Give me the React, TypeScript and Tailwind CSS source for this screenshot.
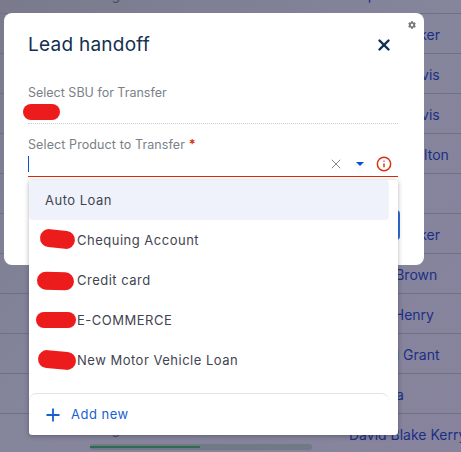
import { Info, Plus, X } from 'lucide-react';
import { FaCog } from 'react-icons/fa';

const rows = ['Gupta Rao', 'Robert Parker', 'Jessica Davis', 'Jessica Davis', 'Maria Hamilton', 'Rao', 'Robert Parker', 'Martin Brown', 'Emma Henry', 'Richard Grant', 'Anna Sa', 'David Blake Kerry'];

const options = [
  { label: 'Chequing Account', blob: 'w-[35px] h-[18px] ml-[-5px] mr-[2px] mt-[-4px] rotate-[6deg]' },
  { label: 'Credit card', blob: 'w-[37px] h-[18px] ml-[-8px] mr-[3px] rotate-[2deg]' },
  { label: 'E-COMMERCE', blob: 'w-[40px] h-[16px] ml-[-9px] mr-[1px] mt-[-2px]' },
  { label: 'New Motor Vehicle Loan', blob: 'w-[38px] h-[18px] ml-[-7px] mr-[1px] mt-[-2px] rotate-[5deg]' },
];

export default function App() {
  return (
    <div className="relative w-[461px] h-[452px] overflow-hidden bg-gradient-to-br from-[#797b8c] via-[#85859c] to-[#87839c] font-['Inter',sans-serif]">
      {/* table behind the overlay */}
      <div className="mt-[-26px]">
        {rows.map((name, i) => (
          <div key={i} className="h-[40px] border-b border-[#6f7183] flex items-center pt-[2px] text-[14px] whitespace-nowrap">
            <span className={`w-[349px] shrink-0 pl-[66px] text-[#4a4c58] ${i === rows.length - 1 ? 'mb-[12px]' : ''}`}>
              {i === 0 || i === rows.length - 1 ? 'Pending' : ''}
            </span>
            <span className="text-[#1c2f86]">{name}</span>
          </div>
        ))}
      </div>

      {/* modal */}
      <div className="absolute left-[4px] top-[13px] w-[420px] h-[252px] rounded-[8px] bg-white pl-[24px] pr-[26px] pt-[18px]">
        <FaCog className="absolute right-[8px] top-[8px] w-[8px] h-[8px] text-[#777]" />
        <div className="flex items-center justify-between pr-[5px]">
          <h2 className="text-[19px] leading-[28px] tracking-[0.25px] text-[#12304f]">Lead handoff</h2>
          <X className="w-[18px] h-[18px] text-[#12304f]" strokeWidth={3.2} />
        </div>
        <div className="mt-[26px] border-b border-dotted border-[#ccc] pb-[3px]">
          <p className="text-[12.5px] leading-[16px] text-[#7b7f87]">Select SBU for Transfer</p>
          <div className="mt-[3px] ml-[-5px] w-[37px] h-[16px] rounded-full bg-[#ec1c1c]" />
        </div>
        <div className="mt-[13px]">
          <p className="text-[12.5px] tracking-[0.1px] leading-[16px] text-[#7b7f87]">
            Select Product to Transfer <span className="text-[#d8330f] font-bold">*</span>
          </p>
          <div className="flex items-center h-[24px] pb-[1px] pr-[6px] border-b border-[#d62b06]">
            <div className="w-[1px] h-[16px] bg-[#0b4fd6]" />
            <div className="ml-auto flex items-center gap-[12px]">
              <X className="w-[16px] h-[16px] text-[#888]" strokeWidth={1.5} />
              <div className="w-0 h-0 border-x-[4px] border-x-transparent border-t-[4px] border-t-[#0b4fd6]" />
              <Info className="w-[16px] h-[16px] text-[#d8330f]" strokeWidth={2.2} />
            </div>
          </div>
        </div>
        <div className="absolute right-[24px] top-[197px] w-[60px] h-[30px] rounded-[4px] bg-[#2f6fdc]" />
      </div>

      {/* dropdown */}
      <div className="absolute left-[29px] top-[180px] w-[369px] h-[255px] rounded-[3px] bg-white shadow-[0_1px_5px_rgba(0,0,0,0.3)] flex flex-col text-[13px] tracking-[0.5px]">
        <div className="h-[40px] pt-[2px] mr-[9px] rounded-[4px] bg-[#eff2fb] flex items-center pl-[16px] text-[#3f4550]">Auto Loan</div>
        {options.map(o => (
          <div key={o.label} className="h-[40px] pt-[2px] flex items-center pl-[16px] text-[#3f4550]">
            <div className={`${o.blob} rounded-full bg-[#ec1c1c] shrink-0`} />
            <span className="whitespace-nowrap">{o.label}</span>
          </div>
        ))}
        <div className="mt-auto h-[42px] border-t border-[#e3e3e3] rounded-t-[8px] mr-[9px] flex items-center pl-[14px] text-[#1a5fd0]">
          <Plus className="w-[20px] h-[20px]" strokeWidth={2.2} />
          <span className="ml-[8px]">Add new</span>
        </div>
      </div>

      {/* horizontal scroll bar */}
      <div className="absolute left-[90px] top-[444px] w-[222px] h-[6px] pt-[2px] rounded-full bg-[#6f7a85]">
        <div className="w-[110px] h-[2px] bg-[#2f6b4f]" />
      </div>
    </div>
  );
}
